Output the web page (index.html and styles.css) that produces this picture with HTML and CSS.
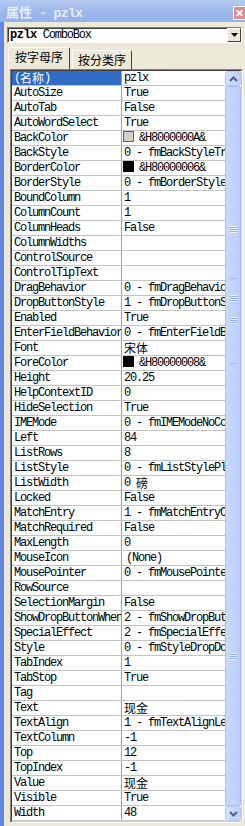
FILE: index.html
```html
<!DOCTYPE html>
<html lang="zh-CN">
<head>
    <meta charset="UTF-8">
    <title>属性 - pzlx</title>
    <link rel="stylesheet" href="styles.css">
</head>
<body>
<div class="window">
    <div class="titlebar">
        <span class="title"><span class="cn">属性</span> - pzlx</span>
        <span class="close">
            <svg width="12" height="11" viewBox="0 0 12 11"><path d="M3 2 L9 8 M9 2 L3 8" stroke="#fff" stroke-width="2"/></svg>
        </span>
    </div>

    <div class="combo">
        <span class="combo-text"><b>pzlx</b> ComboBox</span>
        <span class="drop"><svg width="7" height="4" viewBox="0 0 7 4"><path d="M0 0 H7 L3.5 4 Z" fill="#000"/></svg></span>
    </div>

    <div class="tabs">
        <div class="tab active"><span class="cn">按字母序</span></div>
        <div class="tab"><span class="cn">按分类序</span></div>
    </div>

    <div class="grid">
        <div class="grid-inner">
            <div class="rows">
                <div class="row"><div class="name selected">(<span class="cn">名称</span>)</div><div class="val">pzlx</div></div>
                <div class="row"><div class="name">AutoSize</div><div class="val">True</div></div>
                <div class="row"><div class="name">AutoTab</div><div class="val">False</div></div>
                <div class="row"><div class="name">AutoWordSelect</div><div class="val">True</div></div>
                <div class="row"><div class="name">BackColor</div><div class="val"><span class="swatch light"></span>&amp;H8000000A&amp;</div></div>
                <div class="row"><div class="name">BackStyle</div><div class="val">0 - fmBackStyleTransparent</div></div>
                <div class="row"><div class="name">BorderColor</div><div class="val"><span class="swatch"></span>&amp;H80000006&amp;</div></div>
                <div class="row"><div class="name">BorderStyle</div><div class="val">0 - fmBorderStyleNone</div></div>
                <div class="row"><div class="name">BoundColumn</div><div class="val">1</div></div>
                <div class="row"><div class="name">ColumnCount</div><div class="val">1</div></div>
                <div class="row"><div class="name">ColumnHeads</div><div class="val">False</div></div>
                <div class="row"><div class="name">ColumnWidths</div><div class="val"></div></div>
                <div class="row"><div class="name">ControlSource</div><div class="val"></div></div>
                <div class="row"><div class="name">ControlTipText</div><div class="val"></div></div>
                <div class="row"><div class="name">DragBehavior</div><div class="val">0 - fmDragBehaviorDisabled</div></div>
                <div class="row"><div class="name">DropButtonStyle</div><div class="val">1 - fmDropButtonStyleArrow</div></div>
                <div class="row"><div class="name">Enabled</div><div class="val">True</div></div>
                <div class="row"><div class="name">EnterFieldBehavior</div><div class="val">0 - fmEnterFieldBehaviorSelectAll</div></div>
                <div class="row"><div class="name">Font</div><div class="val"><span class="cn">宋体</span></div></div>
                <div class="row"><div class="name">ForeColor</div><div class="val"><span class="swatch"></span>&amp;H80000008&amp;</div></div>
                <div class="row"><div class="name">Height</div><div class="val">20.25</div></div>
                <div class="row"><div class="name">HelpContextID</div><div class="val">0</div></div>
                <div class="row"><div class="name">HideSelection</div><div class="val">True</div></div>
                <div class="row"><div class="name">IMEMode</div><div class="val">0 - fmIMEModeNoControl</div></div>
                <div class="row"><div class="name">Left</div><div class="val">84</div></div>
                <div class="row"><div class="name">ListRows</div><div class="val">8</div></div>
                <div class="row"><div class="name">ListStyle</div><div class="val">0 - fmListStylePlain</div></div>
                <div class="row"><div class="name">ListWidth</div><div class="val">0 <span class="cn">磅</span></div></div>
                <div class="row"><div class="name">Locked</div><div class="val">False</div></div>
                <div class="row"><div class="name">MatchEntry</div><div class="val">1 - fmMatchEntryComplete</div></div>
                <div class="row"><div class="name">MatchRequired</div><div class="val">False</div></div>
                <div class="row"><div class="name">MaxLength</div><div class="val">0</div></div>
                <div class="row"><div class="name">MouseIcon</div><div class="val indent">(None)</div></div>
                <div class="row"><div class="name">MousePointer</div><div class="val">0 - fmMousePointerDefault</div></div>
                <div class="row"><div class="name">RowSource</div><div class="val"></div></div>
                <div class="row"><div class="name">SelectionMargin</div><div class="val">False</div></div>
                <div class="row"><div class="name">ShowDropButtonWhen</div><div class="val">2 - fmShowDropButtonWhenAlways</div></div>
                <div class="row"><div class="name">SpecialEffect</div><div class="val">2 - fmSpecialEffectSunken</div></div>
                <div class="row"><div class="name">Style</div><div class="val">0 - fmStyleDropDownCombo</div></div>
                <div class="row"><div class="name">TabIndex</div><div class="val">1</div></div>
                <div class="row"><div class="name">TabStop</div><div class="val">True</div></div>
                <div class="row"><div class="name">Tag</div><div class="val"></div></div>
                <div class="row"><div class="name">Text</div><div class="val"><span class="cn">现金</span></div></div>
                <div class="row"><div class="name">TextAlign</div><div class="val">1 - fmTextAlignLeft</div></div>
                <div class="row"><div class="name">TextColumn</div><div class="val">-1</div></div>
                <div class="row"><div class="name">Top</div><div class="val">12</div></div>
                <div class="row"><div class="name">TopIndex</div><div class="val">-1</div></div>
                <div class="row"><div class="name">Value</div><div class="val"><span class="cn">现金</span></div></div>
                <div class="row"><div class="name">Visible</div><div class="val">True</div></div>
                <div class="row"><div class="name">Width</div><div class="val">48</div></div>
            </div>

            <div class="scrollbar">
                <div class="sb-btn">
                    <svg width="9" height="6" viewBox="0 0 9 6"><path d="M1 5 L4.5 1.5 L8 5" fill="none" stroke="#4d6185" stroke-width="2"/></svg>
                </div>
                <div class="thumb">
                    <span class="grip g1"></span>
                    <span class="dash d1"></span>
                    <span class="grip g2"></span>
                    <span class="grip g3"></span>
                    <span class="dash d2"></span>
                    <span class="grip g4"></span>
                </div>
                <div class="sb-btn">
                    <svg width="9" height="6" viewBox="0 0 9 6"><path d="M1 1 L4.5 4.5 L8 1" fill="none" stroke="#4d6185" stroke-width="2"/></svg>
                </div>
            </div>
        </div>
    </div>
</div>
</body>
</html>
```

FILE: styles.css
```css
body {
    margin: 0;
    width: 245px;
    height: 826px;
    overflow: hidden;
    background: #ece9d8;
    font-family: "Liberation Mono", "Noto Sans CJK SC", monospace;
    font-size: 12px;
    letter-spacing: -1.2px;
    color: #000;
}

.cn {
    font-family: "Noto Sans CJK SC", sans-serif;
    letter-spacing: 0;
}

.window {
    height: 826px;
    display: flex;
    flex-direction: column;
    border-left: 4px solid #6287e0;
    box-sizing: border-box;
}

/* title bar */
.titlebar {
    height: 22px;
    margin-left: -4px;
    display: flex;
    justify-content: space-between;
    background: linear-gradient(to bottom, #b8cbf3, #9fb9ec 45%, #94b1ea);
    color: #e6edfb;
    font-weight: bold;
    flex-shrink: 0;
}

.title {
    padding: 4px 0 0 6px;
    font-size: 13px;
    letter-spacing: -0.6px;
    line-height: 16px;
}

.title .cn {
    font-size: 13px;
    font-weight: bold;
}

.close {
    align-self: flex-end;
    width: 11px;
    height: 12px;
    margin-bottom: 2px;
    background: #d98e96;
    border: 1px solid #fff;
    border-right: none;
    border-radius: 2px 0 0 2px;
    display: flex;
    align-items: center;
    justify-content: center;
}

/* object combobox */
.combo {
    margin: 5px 3px 0 3px;
    height: 16px;
    box-sizing: border-box;
    display: flex;
    background: #fff;
    border: 1px solid;
    border-color: #808080 #fff #fff #808080;
    box-shadow: inset 1px 1px #404040;
    flex-shrink: 0;
}

.combo-text {
    flex: 1;
    padding-left: 2px;
    line-height: 14px;
}

.combo-text b {
    letter-spacing: -0.5px;
}

.drop {
    width: 14px;
    height: 14px;
    box-sizing: border-box;
    background: #ece9d8;
    border: 1px solid;
    border-color: #fff #404040 #404040 #fff;
    display: flex;
    align-items: center;
    justify-content: center;
}

/* tabs */
.tabs {
    display: flex;
    align-items: flex-end;
    height: 22px;
    margin: 4px 0 0 4px;
    flex-shrink: 0;
}

.tab {
    height: 19px;
    padding: 0 5px;
    box-sizing: border-box;
    border: 1px solid;
    border-bottom: none;
    border-color: #fff #404040 #404040 #fff;
    border-radius: 2px 2px 0 0;
    line-height: 17px;
    margin-left: 2px;
}

.tab.active {
    height: 22px;
    margin-left: 0;
    padding: 0 6px;
    line-height: 18px;
}

/* property grid */
.grid {
    margin-left: 6px;
    width: 233px;
    height: 754px;
    box-sizing: border-box;
    border: 1px solid;
    border-color: #808080 #fff #fff #808080;
    flex-shrink: 0;
}

.grid-inner {
    height: 100%;
    box-sizing: border-box;
    display: flex;
    border: 1px solid;
    border-color: #404040 #d4d0c8 #d4d0c8 #404040;
    background: #fff;
}

.rows {
    width: 213px;
}

.row {
    display: flex;
    height: 15px;
    box-sizing: border-box;
    border-bottom: 1px solid #c4c4c4;
    line-height: 14px;
    white-space: nowrap;
}

.row .cn {
    display: inline-block;
    height: 14px;
    line-height: 14px;
    vertical-align: top;
}

.name {
    width: 110px;
    box-sizing: border-box;
    padding-left: 2px;
    border-right: 1px solid #a0a0a0;
    overflow: hidden;
}

.name.selected {
    background: #316ac5;
    color: #fff;
}

.val {
    flex: 1;
    padding-left: 2px;
    overflow: hidden;
}

.val.indent {
    padding-left: 4px;
}

.swatch {
    display: inline-block;
    width: 9px;
    height: 9px;
    margin: 0 5px 0 -1px;
    border: 1px solid #000;
    background: #000;
    vertical-align: -1px;
}

.swatch.light {
    background: #d4d0c8;
    border-color: #606060;
}

/* scrollbar */
.scrollbar {
    width: 16px;
    display: flex;
    flex-direction: column;
    background: #f4f3ee;
}

.sb-btn {
    height: 15px;
    box-sizing: border-box;
    border: 1px solid #b4c8f4;
    border-radius: 3px;
    background: linear-gradient(to right, #d6e2fd, #bcd0fa);
    display: flex;
    align-items: center;
    justify-content: center;
}

.thumb {
    flex: 1;
    box-sizing: border-box;
    border: 1px solid #a9bff0;
    border-radius: 2px;
    background: linear-gradient(to right, #cad9fc, #b9cdfa);
    display: flex;
    flex-direction: column;
    align-items: center;
}

.grip {
    width: 7px;
    height: 7px;
    background: repeating-linear-gradient(to bottom, #eef3fe 0 1px, #8fadf0 1px 2px);
}

.dash {
    width: 7px;
    height: 1px;
    background: #9db6ee;
}

.g1 { margin-top: 139px; }
.d1 { margin-top: 45px; }
.g2 { margin-top: 16px; }
.g3 { margin-top: 15px; }
.d2 { margin-top: 39px; }
.g4 { margin-top: 289px; }
```
